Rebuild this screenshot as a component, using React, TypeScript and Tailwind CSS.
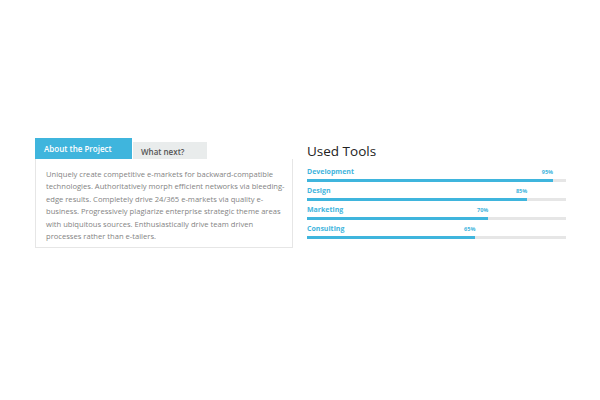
import { useState } from 'react';

const TOOLS = [
  { name: 'Development', value: 95 },
  { name: 'Design', value: 85 },
  { name: 'Marketing', value: 70 },
  { name: 'Consulting', value: 65 },
];

const TABS = [
  { id: 'about', label: 'About the Project' },
  { id: 'next', label: 'What next?' },
];

// Lines broken as in the design
const ABOUT_LINES = [
  'Uniquely create competitive e-markets for backward-compatible',
  'technologies. Authoritatively morph efficient networks via bleeding-',
  'edge results. Completely drive 24/365 e-markets via quality e-',
  'business. Progressively plagiarize enterprise strategic theme areas',
  'with ubiquitous sources. Enthusiastically drive team driven',
  'processes rather than e-tailers.',
];

export default function App() {
  const [activeTab, setActiveTab] = useState('about');

  return (
    <div
      className="w-[600px] h-[400px] bg-white pt-[138px]"
      style={{ fontFamily: '"Open Sans", "Liberation Sans", sans-serif' }}
    >
      <div className="ml-[35px] w-[531px] flex gap-[14px]">
        {/* Tabs */}
        <div className="w-[258px]">
          <div className="flex items-end gap-px">
            {TABS.map((tab) =>
              tab.id === activeTab ? (
                <button
                  key={tab.id}
                  onClick={() => setActiveTab(tab.id)}
                  className="h-[21px] w-[97px] bg-[#3fb5dd] text-white text-[8px] font-semibold pl-[9px] text-left"
                >
                  {tab.label}
                </button>
              ) : (
                <button
                  key={tab.id}
                  onClick={() => setActiveTab(tab.id)}
                  className="h-[17px] w-[74px] bg-[#e9ecec] text-[#555] text-[8px] font-semibold pl-[8px] pt-[2px] text-left"
                >
                  {tab.label}
                </button>
              )
            )}
          </div>
          <div className="border border-[#e6e6e6] border-t-0 h-[89px] pl-[10px] pr-[5px] pt-[9px]">
            <p className="text-[7.6px] leading-[12.4px] text-[#838383] whitespace-nowrap">
              {ABOUT_LINES.map((line, i) => (
                <span key={i}>
                  {line}
                  {i < ABOUT_LINES.length - 1 && <br />}
                </span>
              ))}
            </p>
          </div>
        </div>

        {/* Used tools */}
        <div className="w-[259px]">
          <h2 className="text-[13.5px] leading-[24px] font-medium text-[#222] mt-[1px] mb-[4px]">
            Used Tools
          </h2>
          <div className="flex flex-col gap-[4px]">
            {TOOLS.map((tool) => (
              <div key={tool.name}>
                <div className="relative h-[9px] mb-[3px]">
                  <span className="text-[7px] leading-[9px] font-bold text-[#3fb5dd] block">
                    {tool.name}
                  </span>
                  <span
                    className="absolute top-[2px] -translate-x-full text-[5.5px] leading-[7px] font-bold text-[#3fb5dd]"
                    style={{ left: `${tool.value}%` }}
                  >
                    {tool.value}%
                  </span>
                </div>
                <div className="h-[3px] bg-[#e6e6e6]">
                  <div className="h-full bg-[#3fb5dd]" style={{ width: `${tool.value}%` }} />
                </div>
              </div>
            ))}
          </div>
        </div>
      </div>
    </div>
  );
}
